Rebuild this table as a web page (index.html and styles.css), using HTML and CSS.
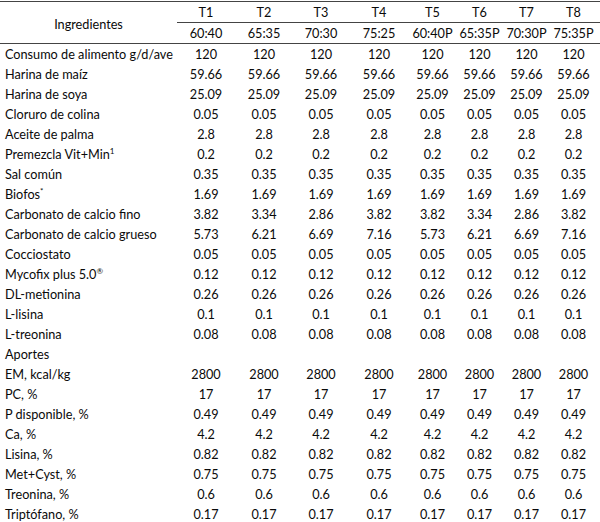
FILE: index.html
```html
<!DOCTYPE html>
<html lang="es">
<head>
<meta charset="utf-8">
<link rel="stylesheet" href="styles.css">
</head>
<body>
<table class="tbl">
  <colgroup>
    <col class="c-name"><col class="c-a"><col class="c-a"><col class="c-b"><col class="c-c"><col class="c-d"><col class="c-d"><col class="c-d"><col class="c-e">
  </colgroup>
  <thead>
    <tr class="h1">
      <th rowspan="2" class="ing">Ingredientes</th>
      <th>T1</th><th>T2</th><th>T3</th><th>T4</th><th>T5</th><th>T6</th><th>T7</th><th class="last">T8</th>
    </tr>
    <tr class="h2">
      <th>60:40</th><th>65:35</th><th>70:30</th><th>75:25</th><th>60:40P</th><th>65:35P</th><th>70:30P</th><th class="last">75:35P</th>
    </tr>
  </thead>
  <tbody>
    <tr><td>Consumo de alimento g/d/ave</td><td>120</td><td>120</td><td>120</td><td>120</td><td>120</td><td>120</td><td>120</td><td class="last">120</td></tr>
    <tr><td>Harina de maíz</td><td>59.66</td><td>59.66</td><td>59.66</td><td>59.66</td><td>59.66</td><td>59.66</td><td>59.66</td><td class="last">59.66</td></tr>
    <tr><td>Harina de soya</td><td>25.09</td><td>25.09</td><td>25.09</td><td>25.09</td><td>25.09</td><td>25.09</td><td>25.09</td><td class="last">25.09</td></tr>
    <tr><td>Cloruro de colina</td><td>0.05</td><td>0.05</td><td>0.05</td><td>0.05</td><td>0.05</td><td>0.05</td><td>0.05</td><td class="last">0.05</td></tr>
    <tr><td>Aceite de palma</td><td>2.8</td><td>2.8</td><td>2.8</td><td>2.8</td><td>2.8</td><td>2.8</td><td>2.8</td><td class="last">2.8</td></tr>
    <tr><td>Premezcla Vit+Min<sup>1</sup></td><td>0.2</td><td>0.2</td><td>0.2</td><td>0.2</td><td>0.2</td><td>0.2</td><td>0.2</td><td class="last">0.2</td></tr>
    <tr><td>Sal común</td><td>0.35</td><td>0.35</td><td>0.35</td><td>0.35</td><td>0.35</td><td>0.35</td><td>0.35</td><td class="last">0.35</td></tr>
    <tr><td>Biofos<sup>*</sup></td><td>1.69</td><td>1.69</td><td>1.69</td><td>1.69</td><td>1.69</td><td>1.69</td><td>1.69</td><td class="last">1.69</td></tr>
    <tr><td>Carbonato de calcio fino</td><td>3.82</td><td>3.34</td><td>2.86</td><td>3.82</td><td>3.82</td><td>3.34</td><td>2.86</td><td class="last">3.82</td></tr>
    <tr><td>Carbonato de calcio grueso</td><td>5.73</td><td>6.21</td><td>6.69</td><td>7.16</td><td>5.73</td><td>6.21</td><td>6.69</td><td class="last">7.16</td></tr>
    <tr><td>Cocciostato</td><td>0.05</td><td>0.05</td><td>0.05</td><td>0.05</td><td>0.05</td><td>0.05</td><td>0.05</td><td class="last">0.05</td></tr>
    <tr><td>Mycofix plus 5.0<sup>®</sup></td><td>0.12</td><td>0.12</td><td>0.12</td><td>0.12</td><td>0.12</td><td>0.12</td><td>0.12</td><td class="last">0.12</td></tr>
    <tr><td>DL-metionina</td><td>0.26</td><td>0.26</td><td>0.26</td><td>0.26</td><td>0.26</td><td>0.26</td><td>0.26</td><td class="last">0.26</td></tr>
    <tr><td>L-lisina</td><td>0.1</td><td>0.1</td><td>0.1</td><td>0.1</td><td>0.1</td><td>0.1</td><td>0.1</td><td class="last">0.1</td></tr>
    <tr><td>L-treonina</td><td>0.08</td><td>0.08</td><td>0.08</td><td>0.08</td><td>0.08</td><td>0.08</td><td>0.08</td><td class="last">0.08</td></tr>
    <tr><td>Aportes</td><td></td><td></td><td></td><td></td><td></td><td></td><td></td><td class="last"></td></tr>
    <tr><td>EM, kcal/kg</td><td>2800</td><td>2800</td><td>2800</td><td>2800</td><td>2800</td><td>2800</td><td>2800</td><td class="last">2800</td></tr>
    <tr><td>PC, %</td><td>17</td><td>17</td><td>17</td><td>17</td><td>17</td><td>17</td><td>17</td><td class="last">17</td></tr>
    <tr><td>P disponible, %</td><td>0.49</td><td>0.49</td><td>0.49</td><td>0.49</td><td>0.49</td><td>0.49</td><td>0.49</td><td class="last">0.49</td></tr>
    <tr><td>Ca, %</td><td>4.2</td><td>4.2</td><td>4.2</td><td>4.2</td><td>4.2</td><td>4.2</td><td>4.2</td><td class="last">4.2</td></tr>
    <tr><td>Lisina, %</td><td>0.82</td><td>0.82</td><td>0.82</td><td>0.82</td><td>0.82</td><td>0.82</td><td>0.82</td><td class="last">0.82</td></tr>
    <tr><td>Met+Cyst, %</td><td>0.75</td><td>0.75</td><td>0.75</td><td>0.75</td><td>0.75</td><td>0.75</td><td>0.75</td><td class="last">0.75</td></tr>
    <tr><td>Treonina, %</td><td>0.6</td><td>0.6</td><td>0.6</td><td>0.6</td><td>0.6</td><td>0.6</td><td>0.6</td><td class="last">0.6</td></tr>
    <tr><td>Triptófano, %</td><td>0.17</td><td>0.17</td><td>0.17</td><td>0.17</td><td>0.17</td><td>0.17</td><td>0.17</td><td class="last">0.17</td></tr>
  </tbody>
</table>
</body>
</html>
```
FILE: styles.css
```css
html, body {
  margin: 0;
  padding: 0;
  background: #fff;
}
body {
  padding-top: 1px;
  font-family: "Lato", "Liberation Sans", sans-serif;
  font-size: 12.7px;
  color: #0a0a0a;
}
.tbl {
  width: 600px;
  border-collapse: collapse;
  table-layout: fixed;
  border-top: 1px solid #444;
  border-bottom: 2px solid #555;
}
.c-name { width: 177px; }
.c-a { width: 58px; }
.c-b { width: 56px; }
.c-c { width: 60px; }
.c-d { width: 47px; }
.c-e { width: 50px; }
.tbl th, .tbl td {
  height: 20px;
  padding: 0;
  text-align: center;
  font-weight: normal;
  line-height: 20px;
  white-space: nowrap;
}
.tbl td.last, .tbl th.last { padding-right: 3px; }
.tbl tbody td:first-child {
  text-align: left;
  padding-left: 5px;
}
.tbl th.ing { padding-top: 2px; }
.h1 th:not(.ing) { border-bottom: 1px solid #444; }
.h2 th, .tbl th.ing { border-bottom: 1px solid #444; }
sup {
  font-size: 8px;
  line-height: 0;
  vertical-align: 5px;
}
```
